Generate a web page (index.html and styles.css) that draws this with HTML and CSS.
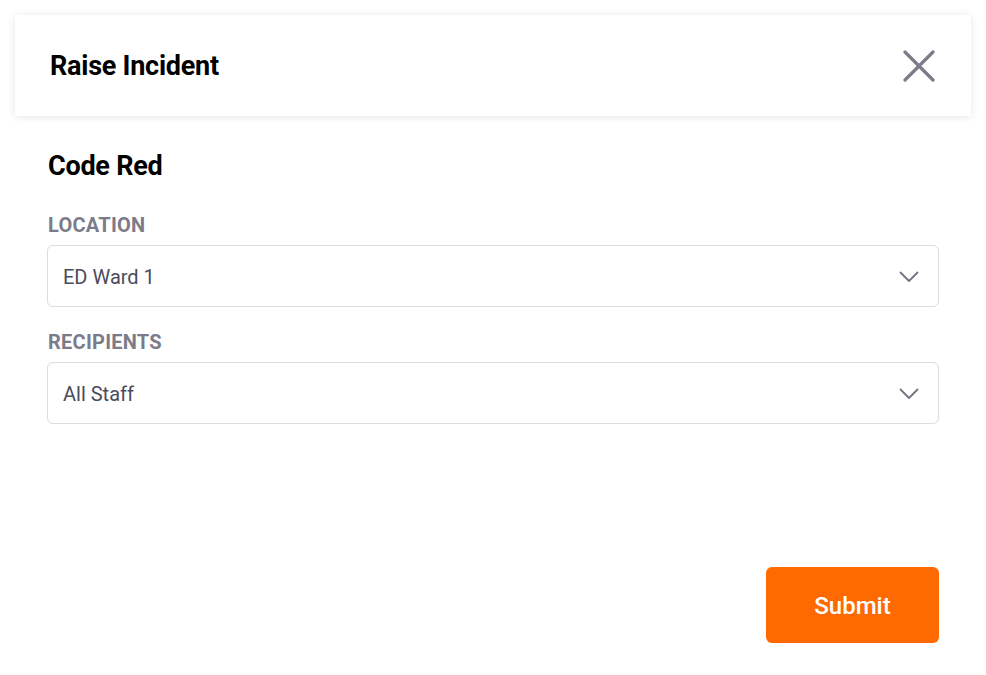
FILE: index.html
```html
<!DOCTYPE html>
<html>
<head>
<meta charset="utf-8">
<link rel="stylesheet" href="styles.css">
</head>
<body>
<div class="modal">
  <header class="header">
    <h1 class="title">Raise Incident</h1>
    <button class="close" aria-label="Close">
      <svg width="32" height="32" viewBox="0 0 32 32"><path d="M2 2 L30 30 M30 2 L2 30" stroke="#7b7b89" stroke-width="3.2" stroke-linecap="round" fill="none"/></svg>
    </button>
  </header>
  <main class="content">
    <h2 class="subtitle">Code Red</h2>
    <div class="field first">
      <div class="label">LOCATION</div>
      <div class="select">
        <span class="value">ED Ward 1</span>
        <svg class="chev" width="20" height="12" viewBox="0 0 20 12"><path d="M1.5 1.5 L10 10 L18.5 1.5" stroke="#737382" stroke-width="1.8" fill="none" stroke-linecap="round" stroke-linejoin="round"/></svg>
      </div>
    </div>
    <div class="field">
      <div class="label">RECIPIENTS</div>
      <div class="select">
        <span class="value">All Staff</span>
        <svg class="chev" width="20" height="12" viewBox="0 0 20 12"><path d="M1.5 1.5 L10 10 L18.5 1.5" stroke="#737382" stroke-width="1.8" fill="none" stroke-linecap="round" stroke-linejoin="round"/></svg>
      </div>
    </div>
    <div class="actions">
      <button class="submit">Submit</button>
    </div>
  </main>
</div>
</body>
</html>
```

FILE: styles.css
```css
* { box-sizing: border-box; }
html, body { margin: 0; background: #ffffff; }
body {
  padding: 15px;
  font-family: Roboto, "Liberation Sans", Arial, sans-serif;
}
.header {
  height: 101px;
  background: #fff;
  box-shadow: 0 1px 8px rgba(0,0,0,0.10);
  display: flex;
  align-items: center;
  justify-content: space-between;
  padding: 0 36px 0 35px;
}
.title {
  margin: 0;
  font-size: 27px;
  font-weight: 700;
  line-height: 32px;
  color: #000;
  letter-spacing: -0.25px;
}
.close {
  border: 0;
  background: none;
  padding: 0;
  width: 32px;
  height: 32px;
  display: flex;
  cursor: pointer;
}
.content {
  padding: 0 32px;
  display: flex;
  flex-direction: column;
}
.subtitle {
  margin: 34px 0 0 1px;
  font-size: 27px;
  font-weight: 700;
  line-height: 32px;
  color: #000;
  letter-spacing: -0.25px;
}
.field { display: flex; flex-direction: column; gap: 8px; margin-top: 23px; }
.field.first { margin-top: 31px; }
.label {
  font-size: 20px;
  line-height: 24px;
  font-weight: 700;
  color: #7b7b89;
  margin-left: 1px;
  letter-spacing: 0.25px;
}
.select {
  height: 62px;
  border: 1px solid #dcdce1;
  border-radius: 6px;
  display: flex;
  align-items: center;
  justify-content: space-between;
  padding: 0 19px 0 15px;
}
.value {
  font-size: 20px;
  color: #4b4b5c;
  margin-top: 1px;
}
.chev { margin-top: 1px; }
.actions {
  display: flex;
  justify-content: flex-end;
  margin-top: 143px;
}
.submit {
  width: 173px;
  height: 76px;
  border: 0;
  border-radius: 6px;
  background: #ff6a00;
  color: #fff;
  font-family: Roboto, "Liberation Sans", Arial, sans-serif;
  font-size: 24px;
  font-weight: 500;
  padding: 2px 0 0;
  cursor: pointer;
}
```
